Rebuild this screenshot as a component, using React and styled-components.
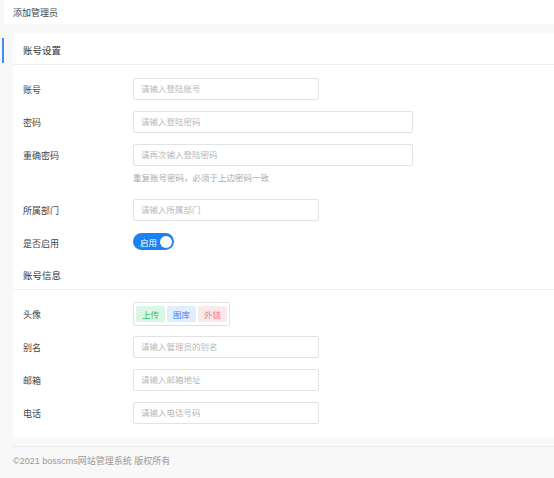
import styled, { createGlobalStyle } from "styled-components";

const GlobalStyle = createGlobalStyle`
  html, body {
    margin: 0;
    padding: 0;
    background: #f8f8f8;
    font-family: "Liberation Sans", "Noto Sans CJK SC", sans-serif;
    color: #333;
  }
  * {
    box-sizing: border-box;
  }
`;

const Page = styled.div`
  position: relative;
  width: 554px;
  min-height: 478px;
  overflow: hidden;
`;

const TopBar = styled.div`
  margin-left: 4px;
  height: 24px;
  background: #fff;
  padding-left: 9px;
  display: flex;
  align-items: center;
  font-size: 9px;
  color: #444;
`;

const SideMark = styled.div`
  position: absolute;
  left: 2px;
  top: 38px;
  width: 2px;
  height: 25px;
  background: #3d8ef0;
`;

const Main = styled.div`
  padding: 9px 0 0 13px;
`;

const Card = styled.div`
  background: #fff;
`;

const SectionHead = styled.div`
  height: 32px;
  padding: 3px 0 0 10px;
  display: flex;
  align-items: center;
  font-size: 9.5px;
  color: #333;
  border-bottom: 1px solid #eeeeee;
`;

const SectionBody = styled.div`
  padding: ${(p) => p.$pad};
`;

const Row = styled.div`
  display: flex;
  align-items: flex-start;
  margin-bottom: ${(p) => (p.$last ? 0 : "11px")};
`;

const Label = styled.div`
  width: 120px;
  padding-left: 10px;
  height: ${(p) => p.$h || 22}px;
  display: flex;
  align-items: center;
  font-size: 9px;
  color: #444;
`;

const Field = styled.div`
  display: flex;
  flex-direction: column;
`;

const Input = styled.input`
  width: ${(p) => (p.$wide ? 280 : 186)}px;
  height: 22px;
  border: 1px solid #e3e3e3;
  border-radius: 2px;
  padding: 0 0 0 7px;
  font-family: inherit;
  font-size: 8.5px;
  color: #333;
  outline: none;
  background: #fff;
  &::placeholder {
    color: #b8b8b8;
  }
`;

const Help = styled.div`
  margin: 5px 0 3px;
  line-height: 14px;
  font-size: 8.5px;
  color: #aaa;
`;

const Switch = styled.div`
  margin-top: 1px;
  width: 41px;
  height: 17px;
  border-radius: 9px;
  background: #1a82f6;
  display: flex;
  align-items: center;
  justify-content: space-between;
  padding: 0 2px 0 7px;
  color: #fff;
  font-size: 8.5px;
`;

const Knob = styled.span`
  width: 12px;
  height: 12px;
  border-radius: 50%;
  background: #fff;
`;

const Uploader = styled.div`
  display: flex;
  gap: 2px;
  padding: 3px 2px;
  border: 1px solid #e3e3e3;
  border-radius: 2px;
  height: 24px;
`;

const tones = {
  green: ["#dcf6e5", "#37c06a"],
  blue: ["#e2edfd", "#3f82f0"],
  red: ["#f8e9ea", "#f07c84"],
};

const UpButton = styled.span`
  width: 29px;
  height: 16px;
  border-radius: 2px;
  display: flex;
  align-items: center;
  justify-content: center;
  font-size: 8.5px;
  background: ${(p) => tones[p.$tone][0]};
  color: ${(p) => tones[p.$tone][1]};
`;

const Footer = styled.div`
  margin-top: 9px;
  border-top: 1px solid #ececec;
  height: 28px;
  display: flex;
  align-items: center;
  font-size: 9px;
  color: #999;
`;

const App = () => {
  return (
    <Page>
      <GlobalStyle />
      <TopBar>添加管理员</TopBar>
      <SideMark />
      <Main>
        <Card>
          <SectionHead>账号设置</SectionHead>
          <SectionBody $pad="13px 0 4px">
            <Row>
              <Label>账号</Label>
              <Input placeholder="请输入登陆账号" />
            </Row>
            <Row>
              <Label>密码</Label>
              <Input $wide type="password" placeholder="请输入登陆密码" />
            </Row>
            <Row>
              <Label>重确密码</Label>
              <Field>
                <Input $wide type="password" placeholder="请再次输入登陆密码" />
                <Help>重复账号密码，必须于上边密码一致</Help>
              </Field>
            </Row>
            <Row>
              <Label>所属部门</Label>
              <Input placeholder="请输入所属部门" />
            </Row>
            <Row $last>
              <Label>是否启用</Label>
              <Switch>
                启用
                <Knob />
              </Switch>
            </Row>
          </SectionBody>
          <SectionHead>账号信息</SectionHead>
          <SectionBody $pad="12px 0 13px">
            <Row style={{ marginBottom: 10 }}>
              <Label $h={24}>头像</Label>
              <Uploader>
                <UpButton $tone="green">上传</UpButton>
                <UpButton $tone="blue">图库</UpButton>
                <UpButton $tone="red">外链</UpButton>
              </Uploader>
            </Row>
            <Row>
              <Label>别名</Label>
              <Input placeholder="请输入管理员的别名" />
            </Row>
            <Row>
              <Label>邮箱</Label>
              <Input placeholder="请输入邮箱地址" />
            </Row>
            <Row $last>
              <Label>电话</Label>
              <Input placeholder="请输入电话号码" />
            </Row>
          </SectionBody>
        </Card>
        <Footer>©2021 bosscms网站管理系统 版权所有</Footer>
      </Main>
    </Page>
  );
};

export default App;
